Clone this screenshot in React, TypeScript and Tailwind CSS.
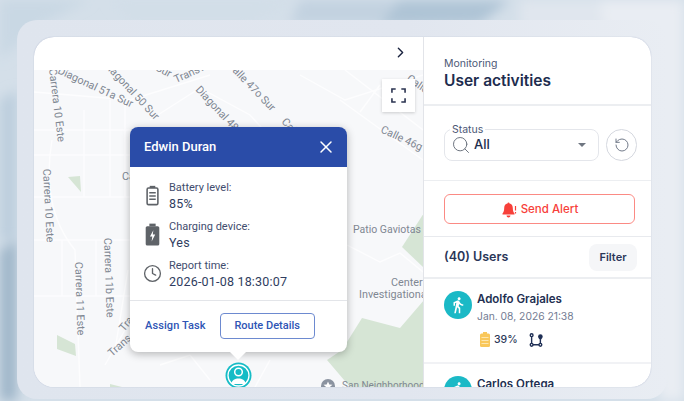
import { ChevronRight, Clock, RotateCcw, Search, X } from "lucide-react";
import { MdDirectionsWalk } from "react-icons/md";

const roads = [
  "M34 92 L130 100 L210 75",
  "M150 120 L200 88 L250 115 L300 170",
  "M34 130 H130",
  "M34 155 H130",
  "M34 197 H130",
  "M110 100 V197",
  "M125 100 V197",
  "M84 110 V197",
  "M52 140 C45 180 50 220 75 250 L80 387",
  "M34 240 H130",
  "M34 296 H130",
  "M62 240 V296",
  "M96 240 V296",
  "M128 270 L115 350",
  "M125 330 L105 365",
  "M345 70 L423 130",
  "M340 100 L423 160",
  "M380 85 L360 112",
  "M300 75 L345 100 L423 75",
  "M347 245 L380 262 L400 253 L423 272",
  "M160 365 L190 355 L210 380",
  "M270 360 L255 387",
  "M320 300 L347 330",
];

function BatteryIcon({ className, color }: { className: string; color: string }) {
  return (
    <svg viewBox="0 0 14 22" className={className} fill="none">
      <rect x="1.2" y="3" width="11.6" height="17.8" rx="1.5" stroke={color} strokeWidth="1.7" />
      <rect x="4" y="0.6" width="6" height="2.4" fill={color} />
      <path d="M3.5 8h7M3.5 11.5h7M3.5 15h7" stroke={color} strokeWidth="1.7" />
    </svg>
  );
}

function ChargingIcon() {
  return (
    <svg viewBox="0 0 14 22" className="h-[23px] w-[15px]">
      <rect x="0.5" y="3" width="13" height="18.5" rx="1.5" fill="#5f6368" />
      <rect x="4" y="0.6" width="6" height="2.6" fill="#5f6368" />
      <path d="M7.8 7 4.6 13h2.2l-.6 4.6L9.6 11H7.3z" fill="#fff" />
    </svg>
  );
}

function RouteIcon() {
  return (
    <svg viewBox="0 0 16 16" className="h-[14px] w-[14px]" fill="none" stroke="#1f2f55" strokeWidth="1.6">
      <circle cx="3" cy="2.5" r="1.6" />
      <circle cx="3" cy="13.5" r="1.6" />
      <circle cx="13" cy="13.5" r="1.6" />
      <path d="M3 4.2v7.6M4.6 13.5h6.800M13 8v3.800" />
      <path d="M13 8.600c-1.700-2-2.600-3.200-2.600-4.600a2.600 2.600 0 0 1 5.200 0c0 1.400-.9 2.600-2.600 4.600z" fill="#1f2f55" stroke="none" />
    </svg>
  );
}

function MapCanvas() {
  const label = "fill-[#7f8792] text-[10.8px]";
  return (
    <svg viewBox="34 70 389 317" className="h-full w-full font-['Roboto',sans-serif]">
      <rect x="34" y="70" width="389" height="317" fill="#f7f8fa" />
      <g fill="#d6e5d5">
        <path d="M424 213 402 247 424 268Z" />
        <path d="M424 300 400 328 362 318 342 350 327 360 350 387H424Z" />
        <path d="M68 177 80 176 81 192Z" />
        <path d="M57 335 75 344 76 356 57 349Z" />
        <path d="M110 384 122 387H110Z" />
      </g>
      <g fill="none" stroke="#fdfdfe" strokeWidth="1.4">
        {roads.map((d) => (
          <path key={d} d={d} />
        ))}
      </g>
      <g className={label}>
        <text transform="translate(49 69) rotate(83)">Carrera 10 Este</text>
        <text transform="translate(57 73) rotate(25)">Diagonal 51a Sur</text>
        <text transform="translate(103 65) rotate(47)">Diagonal 50 Sur</text>
        <text transform="translate(155 70) rotate(28)">Sur</text>
        <text transform="translate(176 83) rotate(-24)">Transv</text>
        <text transform="translate(195 90) rotate(47)">Diagonal 48</text>
        <text transform="translate(227 66) rotate(46)">Calle 47o Sur</text>
        <text transform="translate(281 122) rotate(48)">Calle</text>
        <text transform="translate(406 80) rotate(35)">Calle</text>
        <text transform="translate(380 132) rotate(25)">Calle 46g Sur</text>
        <text transform="translate(43 169) rotate(87)">Carrera 10 Este</text>
        <text transform="translate(75 262) rotate(88)">Carrera 11 Este</text>
        <text transform="translate(104 238) rotate(88)">Carrera 11b Este</text>
        <text transform="translate(124 332) rotate(-50)">Trans</text>
        <text transform="translate(112 357) rotate(-42)">Trans</text>
        <text x="122" y="180">Ca</text>
        <text x="353" y="233" className="text-[10.5px]">Patio Gaviotas</text>
        <text x="391" y="286">Center</text>
        <text x="359" y="298">Investigational</text>
        <text x="342" y="389" className="text-[10px]">San Neighborhood</text>
      </g>
      <circle cx="328" cy="386" r="7" fill="#8b93a0" />
      <path d="M328 381.500l1.300 3 3.200.2-2.400 2.100.8 3.100-2.900-1.700-2.900 1.700.8-3.100-2.400-2.100 3.200-.2z" fill="#fff" />
      <circle cx="238.500" cy="375.500" r="13" fill="#15bcc6" />
      <circle cx="238.500" cy="375.500" r="10.500" fill="none" stroke="#fff" strokeWidth="1.300" />
      <circle cx="238.500" cy="372" r="3.800" fill="none" stroke="#fff" strokeWidth="1.500" />
      <path d="M231 384c1-4 4-5.500 7.500-5.500s6.500 1.500 7.500 5.500z" fill="#fff" />
    </svg>
  );
}

function InfoRow({ icon, label, value }: { icon: React.ReactNode; label: string; value: string }) {
  return (
    <div className="flex items-center">
      <div className="flex w-[39px] justify-center pl-[6px]">{icon}</div>
      <div>
        <div className="text-[11px] leading-[15px] text-[#3f4d6e]">{label}</div>
        <div className="mt-[1px] text-[12.5px] leading-[15px] tracking-[0.2px] text-[#2f3d60]">{value}</div>
      </div>
    </div>
  );
}

function Popup() {
  return (
    <div className="absolute left-[96px] top-[57px] h-[225px] w-[217px] rounded-lg bg-white font-['Roboto',sans-serif] shadow-[0_2px_8px_rgba(0,0,0,0.28)]">
      <div className="flex h-[40px] items-center justify-between rounded-t-lg bg-[#2a4ca8] pl-[14px] pr-[11px]">
        <span className="text-[13px] font-medium text-white">Edwin Duran</span>
        <X className="h-[20px] w-[20px] text-white" strokeWidth={1.800} />
      </div>
      <div className="flex flex-col gap-[8px] pt-[13px]">
        <InfoRow
          icon={<BatteryIcon className="h-[21px] w-[13px]" color="#5f6368" />}
          label="Battery level:"
          value="85%"
        />
        <InfoRow icon={<ChargingIcon />} label="Charging device:" value="Yes" />
        <InfoRow
          icon={<Clock className="h-[19px] w-[19px] text-[#5f6368]" strokeWidth={1.700} />}
          label="Report time:"
          value="2026-01-08 18:30:07"
        />
      </div>
      <div className="mt-[11px] flex h-[51px] items-center gap-[14px] border-t border-[#e3e5e9] pl-[15px]">
        <span className="text-[11px] font-medium tracking-[0.1px] text-[#2f55b5]">Assign Task</span>
        <span className="flex h-[26px] w-[95px] items-center justify-center rounded border border-[#6d8ad0] text-[11px] font-medium text-[#2f55b5]">
          Route Details
        </span>
      </div>
      <div className="absolute bottom-[-8px] left-[100px] h-0 w-0 border-x-[8px] border-t-[8px] border-x-transparent border-t-white" />
    </div>
  );
}

function UserRow({ name, tall }: { name: string; tall?: boolean }) {
  return (
    <div className="shrink-0 border-b-2 border-[#f1f2f5] pl-[20px] pt-[12px]">
      <div className="flex items-start gap-[5px]">
        <div className="flex h-[28px] w-[28px] shrink-0 items-center justify-center rounded-full bg-[#1bb9c6]">
          <MdDirectionsWalk className="h-[18px] w-[18px] text-white" />
        </div>
        <div>
          <div className="text-[11.500px] font-semibold leading-[16px] text-[#232f52]">{name}</div>
          {tall && <div className="mt-[1px] text-[10.300px] leading-[16px] text-[#737c93]">Jan. 08, 2026 21:38</div>}
        </div>
      </div>
      {tall && (
        <div className="ml-[36px] mt-[8px] flex h-[16px] items-center pb-[1px]">
          <svg viewBox="0 0 10 15" className="h-[15px] w-[10px]">
            <rect x="0" y="1.500" width="10" height="13.500" rx="1.500" fill="#f9c75a" />
            <rect x="3" y="0" width="4" height="2" fill="#f9c75a" />
            <path d="M1.500 5.500h7M1.500 8.500h7M1.500 11.500h7" stroke="#fde6ae" strokeWidth="1" />
          </svg>
          <span className="ml-[4px] text-[10.500px] font-medium text-[#2c3859]">39%</span>
          <span className="ml-[11px]">
            <RouteIcon />
          </span>
        </div>
      )}
      {tall && <div className="h-[14px]" />}
    </div>
  );
}

function Panel() {
  return (
    <div className="flex h-[350px] w-[228px] shrink-0 flex-col overflow-hidden border-l border-[#e2e4e9] font-['Inter',sans-serif]">
      <div className="h-[69px] shrink-0 border-b-2 border-[#eceef1] pl-[20px] pt-[20px]">
        <div className="text-[10.500px] leading-[14px] text-[#4c5876]">Monitoring</div>
        <div className="text-[15.500px] font-semibold leading-[20px] text-[#202c4e]">User activities</div>
      </div>
      <div className="relative flex h-[75px] shrink-0 items-start gap-[7px] border-b border-[#eceef1] pl-[20px] pt-[23px]">
        <div className="flex h-[32px] w-[155px] items-center rounded-lg border border-[#e4e6eb] pl-[6px] pr-[12px]">
          <Search className="h-[20px] w-[20px] text-[#6f7681]" strokeWidth={1.200} />
          <span className="ml-[3px] flex-1 text-[13px] font-medium text-[#202c4e]">All</span>
          <span className="h-0 w-0 border-x-[4px] border-t-[4px] border-x-transparent border-t-[#6f7681]" />
        </div>
        <span className="absolute left-[26px] top-[18px] bg-white px-[2px] text-[10.500px] leading-[12px] text-[#4c5876]">Status</span>
        <div className="flex h-[32px] w-[31px] items-center justify-center rounded-full border border-[#d5d8df]">
          <RotateCcw className="h-[16px] w-[16px] text-[#737b8a]" strokeWidth={1.500} />
        </div>
      </div>
      <div className="h-[56px] shrink-0 border-b border-[#e8eaee] pl-[20px] pt-[13px]">
        <div className="flex h-[30px] w-[191px] items-center justify-center gap-[4px] rounded-md border border-[#fb8a84] pt-[1px] text-[11.500px] font-medium text-[#f7403a]">
          <svg viewBox="0 0 16 16" className="h-[16px] w-[16px]" fill="#f7403a">
            <path d="M6.500 1.500a1 1 0 0 1 2 0c2.300.5 3.300 2.300 3.300 4.500 0 2.800.6 4 1.700 5.500v1H1.500v-1C2.600 10 3.200 8.800 3.200 6c0-2.200 1-4 3.300-4.500z" />
            <path d="M5.500 13.500h4a2 2 0 0 1-4 0z" />
            <path d="M14.500 4v4.500M14.500 10v1.500" stroke="#f7403a" strokeWidth="1.200" />
          </svg>
          Send Alert
        </div>
      </div>
      <div className="flex h-[42px] shrink-0 items-center justify-between border-b-2 border-[#eceef1] pl-[20px] pr-[14px]">
        <span className="text-[12.500px] font-semibold text-[#2a3658]">(40) Users</span>
        <span className="flex h-[27px] w-[48px] items-center justify-center rounded-lg bg-[#f5f6f8] text-[11px] font-semibold text-[#2a3658]">
          Filter
        </span>
      </div>
      <UserRow name="Adolfo Grajales" tall />
      <UserRow name="Carlos Ortega" />
    </div>
  );
}

export default function App() {
  return (
    <div className="relative h-[401px] w-[684px] overflow-hidden bg-[#d3dfe9]">
      <svg viewBox="0 0 684 401" className="absolute inset-0 h-full w-full">
        <defs>
          <filter id="soft" x="-20%" y="-20%" width="140%" height="140%">
            <feGaussianBlur stdDeviation="6" />
          </filter>
        </defs>
        <rect width="684" height="401" fill="#d4dfe9" />
        <g filter="url(#soft)">
          <path d="M0 0H90L40 25 0 60Z" fill="#c9d8e4" />
          <path d="M110 0H300L250 22H130Z" fill="#d2deE8" />
          <path d="M300 0H420L380 24H290Z" fill="#c2d2e0" />
          <path d="M400 0H510L480 24 380 26Z" fill="#afc4d6" />
          <path d="M520 0H684V30H520Z" fill="#e0e6ee" />
          <path d="M600 0H684V401H660Z" fill="#e9edf3" />
          <path d="M0 100 17 90V240H0Z" fill="#bccedd" />
          <path d="M0 250 17 240V401H0Z" fill="#9fb6c9" />
        </g>
      </svg>
      <div className="relative ml-[17px] mt-[20px] h-[379px] w-[650px] rounded-[20px] bg-[linear-gradient(90deg,#dfe5ee_0%,#e1e6ef_60%,#e9edf3_100%)] p-[17px]">
        <div className="flex h-[350px] w-[617px] overflow-hidden rounded-[20px] bg-white shadow-[0_0_1px_rgba(80,100,150,0.5)]">
          <div className="flex w-[389px] shrink-0 flex-col">
            <div className="flex h-[33px] shrink-0 items-center justify-end pb-[2px] pr-[14px]">
              <ChevronRight className="h-[17px] w-[17px] text-[#1b2440]" strokeWidth={2} />
            </div>
            <div className="relative flex-1">
              <MapCanvas />
              <Popup />
              <div className="absolute left-[348px] top-[9px] flex h-[33px] w-[33px] items-center justify-center bg-white shadow-[0_1px_3px_rgba(0,0,0,0.18)]">
                <svg viewBox="0 0 16 16" className="h-[15px] w-[15px]" fill="none" stroke="#2a3350" strokeWidth="1.700">
                  <path d="M1 5V1h4M11 1h4v4M15 11v4h-4M5 15H1v-4" />
                </svg>
              </div>
            </div>
          </div>
          <Panel />
        </div>
      </div>
    </div>
  );
}
